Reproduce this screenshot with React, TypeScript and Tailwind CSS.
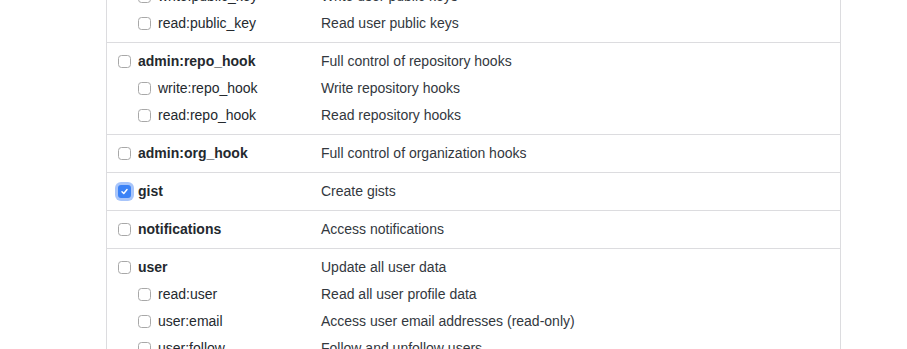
type Scope = { name: string; desc: string; checked?: boolean };
type Group = { parent: Scope; children?: Scope[] };

const groups: Group[] = [
  {
    parent: { name: 'admin:public_key', desc: 'Full control of user public keys' },
    children: [
      { name: 'write:public_key', desc: 'Write user public keys' },
      { name: 'read:public_key', desc: 'Read user public keys' },
    ],
  },
  {
    parent: { name: 'admin:repo_hook', desc: 'Full control of repository hooks' },
    children: [
      { name: 'write:repo_hook', desc: 'Write repository hooks' },
      { name: 'read:repo_hook', desc: 'Read repository hooks' },
    ],
  },
  { parent: { name: 'admin:org_hook', desc: 'Full control of organization hooks' } },
  { parent: { name: 'gist', desc: 'Create gists', checked: true } },
  { parent: { name: 'notifications', desc: 'Access notifications' } },
  {
    parent: { name: 'user', desc: 'Update all user data' },
    children: [
      { name: 'read:user', desc: 'Read all user profile data' },
      { name: 'user:email', desc: 'Access user email addresses (read-only)' },
      { name: 'user:follow', desc: 'Follow and unfollow users' },
    ],
  },
];

const Checkbox = ({ checked }: { checked?: boolean }) =>
  checked ? (
    <span className="w-[13px] h-[13px] rounded-[3px] bg-[#3b82f6] flex items-center justify-center shadow-[0_0_0_3px_rgba(96,150,245,0.55)]">
      <svg width="9" height="9" viewBox="0 0 10 10" fill="none">
        <path d="M2.2 5.2 L4.2 7.2 L7.8 2.8" stroke="white" strokeWidth="1.6" strokeLinecap="round" strokeLinejoin="round" />
      </svg>
    </span>
  ) : (
    <span className="w-[13px] h-[13px] rounded-[3.5px] border border-[#a8a8a8] bg-white" />
  );

const Row = ({ scope, child }: { scope: Scope; child?: boolean }) => (
  <div className="flex items-center h-[27px]">
    <div className={`w-[214px] flex items-center gap-[7px] ${child ? 'pl-[31px]' : 'pl-[11px]'}`}>
      <Checkbox checked={scope.checked} />
      <span className={child ? 'text-[#24292e]' : 'font-semibold text-[#24292e]'}>{scope.name}</span>
    </div>
    <span className="text-[#33383e]">{scope.desc}</span>
  </div>
);

const App = () => {
  return (
    <div className="w-[907px] h-[349px] overflow-hidden bg-white" style={{ fontFamily: '"Liberation Sans", Arial, sans-serif' }}>
      <div className="ml-[106px] w-[735px] border-x border-[#dcdcdf] mt-[-49px] text-[14px]">
        {groups.map((g) => (
          <div key={g.parent.name} className="py-[5px] border-b border-[#dcdcdf]">
            <Row scope={g.parent} />
            {g.children?.map((c) => (
              <Row key={c.name} scope={c} child />
            ))}
          </div>
        ))}
      </div>
    </div>
  );
};

export default App;
